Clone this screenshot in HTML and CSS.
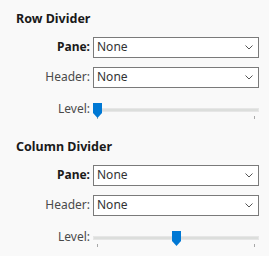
FILE: index.html
```html
<!DOCTYPE html>
<html lang="en">
<head>
  <meta charset="UTF-8">
  <meta name="viewport" content="width=device-width, initial-scale=1.0">
  <title>Dividers</title>
  <link rel="stylesheet" href="styles.css">
</head>
<body>

  <div id="Divisores" class="Divisores">

    <section class="Grupo">
      <h2 class="GrupoTitulo">Row Divider</h2>
      <div class="Campo">
        <label class="CampoDescricao CampoDescricao-forte">Pane:</label>
        <div class="Caixa">
          <span class="CaixaValor">None</span>
          <svg class="CaixaSeta" width="8" height="5" viewBox="0 0 8 5"><path d="M0.5 0.5 L4 4 L7.5 0.5" fill="none" stroke="#555" stroke-width="1"/></svg>
        </div>
      </div>
      <div class="Campo">
        <label class="CampoDescricao">Header:</label>
        <div class="Caixa">
          <span class="CaixaValor">None</span>
          <svg class="CaixaSeta" width="8" height="5" viewBox="0 0 8 5"><path d="M0.5 0.5 L4 4 L7.5 0.5" fill="none" stroke="#555" stroke-width="1"/></svg>
        </div>
      </div>
      <div class="Campo Campo-nivel">
        <label class="CampoDescricao">Level:</label>
        <div class="Nivel">
          <div class="NivelTrilho"></div>
          <span class="NivelMarca NivelMarca-inicio"></span>
          <span class="NivelMarca NivelMarca-fim"></span>
          <svg class="NivelCursor" style="left: calc((100% - 9px) * 0)" width="9" height="15" viewBox="0 0 9 15"><path d="M0 0 H9 V10 L4.5 15 L0 10 Z" fill="#0078d4"/></svg>
        </div>
      </div>
    </section>

    <section class="Grupo">
      <h2 class="GrupoTitulo">Column Divider</h2>
      <div class="Campo">
        <label class="CampoDescricao CampoDescricao-forte">Pane:</label>
        <div class="Caixa">
          <span class="CaixaValor">None</span>
          <svg class="CaixaSeta" width="8" height="5" viewBox="0 0 8 5"><path d="M0.5 0.5 L4 4 L7.5 0.5" fill="none" stroke="#555" stroke-width="1"/></svg>
        </div>
      </div>
      <div class="Campo">
        <label class="CampoDescricao">Header:</label>
        <div class="Caixa">
          <span class="CaixaValor">None</span>
          <svg class="CaixaSeta" width="8" height="5" viewBox="0 0 8 5"><path d="M0.5 0.5 L4 4 L7.5 0.5" fill="none" stroke="#555" stroke-width="1"/></svg>
        </div>
      </div>
      <div class="Campo Campo-nivel">
        <label class="CampoDescricao">Level:</label>
        <div class="Nivel">
          <div class="NivelTrilho"></div>
          <span class="NivelMarca NivelMarca-inicio"></span>
          <span class="NivelMarca NivelMarca-fim"></span>
          <svg class="NivelCursor" style="left: calc((100% - 9px) * 0.5)" width="9" height="15" viewBox="0 0 9 15"><path d="M0 0 H9 V10 L4.5 15 L0 10 Z" fill="#0078d4"/></svg>
        </div>
      </div>
    </section>

  </div>

</body>
</html>
```

FILE: styles.css
```css
html, body {
  margin: 0;
  padding: 0;
  background-color: #f9f9f9;
}
.Divisores {
  width: 269px;
  font-family: "Noto Sans", "Liberation Sans", sans-serif;
  font-size: 12px;
  color: #1a1a1a;
}
.Grupo {
  height: 128px;
  box-sizing: border-box;
  padding: 11px 10px 0 0;
}
.GrupoTitulo {
  margin: 0 0 10px 16px;
  font-size: 12.5px;
  line-height: 16px;
  font-weight: bold;
  color: #1a1a1a;
}
.Campo {
  display: flex;
  align-items: center;
  height: 21px;
  margin-bottom: 9px;
}
.Campo-nivel {
  align-items: flex-start;
  height: 20px;
  margin-top: 12px;
  margin-bottom: 0;
}
.CampoDescricao {
  width: 90px;
  margin-right: 3px;
  text-align: right;
  line-height: 16px;
  padding-bottom: 2px;
  color: #4a4a4a;
}
.Campo-nivel .CampoDescricao {
  line-height: 20px;
  padding-bottom: 0;
  margin-top: -1px;
}
.CampoDescricao-forte {
  font-weight: bold;
  color: #1a1a1a;
}
.Caixa {
  flex: 1;
  height: 21px;
  box-sizing: border-box;
  border: 1px solid #7a7a7a;
  background-color: #fff;
  display: flex;
  align-items: center;
  justify-content: space-between;
  padding: 0 5px 0 3px;
}
.CaixaValor {
  line-height: 16px;
  padding-bottom: 2px;
  color: #333;
}
.Nivel {
  position: relative;
  flex: 1;
  height: 20px;
}
.NivelTrilho {
  margin-top: 8px;
  height: 4px;
  box-sizing: border-box;
  background-color: #dcdedc;
  border: 1px solid #e6e6e6;
}
.NivelMarca {
  position: absolute;
  top: 16px;
  width: 1px;
  height: 3px;
  background-color: #a8a8a8;
}
.NivelMarca-inicio {
  left: 4px;
}
.NivelMarca-fim {
  right: 4px;
}
.NivelCursor {
  position: absolute;
  top: 3px;
}
```
